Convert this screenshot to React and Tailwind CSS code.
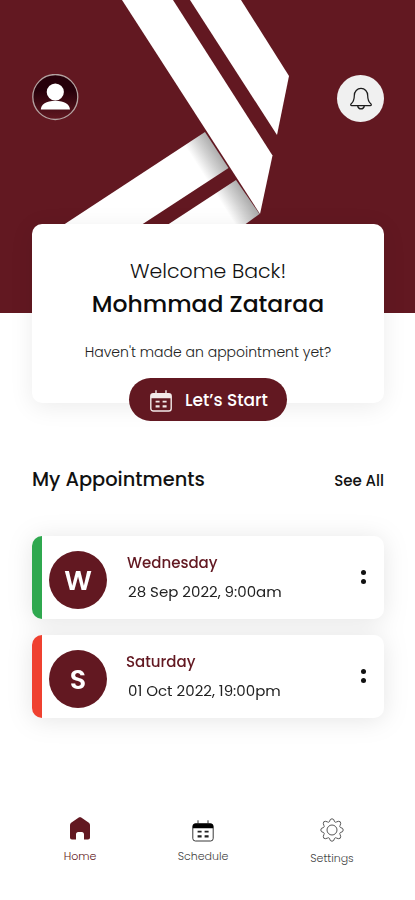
import React from "react";

const appointments = [
  { id: 1, day: "Wednesday", date: "28 Sep 2022, 9:00am", bar: "bg-[#2fa84f]", indent: "" },
  { id: 2, day: "Saturday", date: "01 Oct 2022, 19:00pm", bar: "bg-[#ef4130]", indent: "-ml-px" },
];

function CalendarIcon({ className, top, frame }) {
  return (
    <svg viewBox="0 0 22 22" className={className} fill="none" stroke="currentColor">
      <rect x="0.8" y="3.8" width="20.4" height="17.2" rx="2.6" strokeWidth={frame} />
      <path d="M0.8 8.200V6.200C0.8 4.700 1.900 3.600 3.400 3.600H18.600C20.100 3.600 21.200 4.700 21.200 6.200V8.200Z" fill={top} stroke="none" />
      <path d="M6 0.300V4.400M16 0.300V4.400" strokeWidth={frame} />
      <path d="M5.600 11.700H9.600M12.600 11.700H16.600" strokeWidth="1.800" />
      <path d="M5.600 16.400H9.600M12.600 16.400H16.600" strokeWidth="2.200" />
    </svg>
  );
}

function Stripes() {
  return (
    <svg viewBox="0 0 415 313" className="absolute inset-0 h-full w-full">
      <defs>
        <linearGradient id="fold" gradientUnits="userSpaceOnUse" x1="232" y1="171" x2="210" y2="185">
          <stop offset="0" stopColor="#a9a9a9" />
          <stop offset="0.5" stopColor="#d2d2d2" />
          <stop offset="1" stopColor="#ffffff" />
        </linearGradient>
      </defs>
      <path d="M64 224.500L205 132L228.500 168L142 224.500Z" fill="url(#fold)" />
      <path d="M168 224.500L236 180L259.500 214L245 224.500Z" fill="url(#fold)" />
      <path d="M122 0H173L272.500 155.500L260 214Z" fill="#fff" />
      <path d="M190 0H241L289 76L277 135Z" fill="#fff" />
    </svg>
  );
}

function Header() {
  return (
    <header className="relative h-[313px] bg-[#621821]">
      <Stripes />
      <div className="relative flex items-start justify-between pt-[74px] pr-[31px] pl-8">
        <button className="h-[47px] w-[47px]">
          <svg viewBox="0 0 47 47" className="h-full w-full">
            <defs>
              <linearGradient id="avatar" x1="0" y1="0" x2="0" y2="1">
                <stop offset="0.35" stopColor="#26000a" />
                <stop offset="1" stopColor="#621821" />
              </linearGradient>
            </defs>
            <circle cx="23.300" cy="23" r="22.500" fill="url(#avatar)" stroke="#b3a2a1" strokeWidth="1.300" />
            <circle cx="23.300" cy="18" r="8.600" fill="#fff" />
            <path d="M8.800 35.500C9 30.500 14 26.800 23.300 26.800S37.700 30.500 38 35.500Z" fill="#fff" />
          </svg>
        </button>
        <button className="mt-px flex h-[47px] w-[47px] items-center justify-center rounded-full bg-[#f0f0f0]">
          <svg viewBox="0 0 24 24" className="h-[23px] w-6" fill="none" stroke="#1c1c1c" strokeWidth="1.300" strokeLinejoin="round">
            <path d="M12 1.500C8 1.500 5 4.600 5 9C5 13.500 3.900 15.500 1.800 17.400C0.800 18.400 1.200 19.500 2.400 19.500H21.600C22.800 19.500 23.200 18.400 22.200 17.400C20.100 15.500 19 13.500 19 9C19 4.600 16 1.500 12 1.500Z" />
            <path d="M8.500 19.800C9 21.800 10.300 22.800 12 22.800S15 21.800 15.500 19.800" />
          </svg>
        </button>
      </div>
    </header>
  );
}

function WelcomeCard() {
  return (
    <section className="relative mr-[31px] -mt-[89px] ml-8 flex h-[179px] flex-col items-center rounded-[10px] bg-white pt-[33px] whitespace-nowrap shadow-[0_4px_24px_rgba(0,0,0,0.08)]">
      <p className="text-[20.5px] leading-7 font-light text-[#111]">Welcome Back!</p>
      <h1 className="mt-[5px] text-[23.5px] leading-7 font-medium text-[#0c0c0c]">Mohmmad Zataraa</h1>
      <p className="mt-6 text-[14px] leading-5 font-light text-[#222]">Haven't made an appointment yet?</p>
      <button className="mt-4 flex h-[43px] w-[158px] shrink-0 items-center rounded-full bg-[#621821] pl-[21px] text-white">
        <CalendarIcon className="mt-0.5 h-[22px] w-[22px] text-[#f3e9e9]" top="currentColor" frame="1.400" />
        <span className="ml-[13px] pt-[3px] text-[17px] font-medium">Let’s Start</span>
      </button>
    </section>
  );
}

function AppointmentCard({ item }) {
  return (
    <li className="flex h-[83px] items-center overflow-hidden rounded-[10px] bg-white">
      <div className={`h-full w-2.5 ${item.bar}`} />
      <div className="mt-1 ml-[7px] flex h-[58px] w-[58px] items-center justify-center rounded-full bg-[#621821] pt-1 text-[27px] font-semibold text-white">
        {item.day[0]}
      </div>
      <div className="-mt-px ml-5 whitespace-nowrap">
        <p className={`text-[15px] leading-5 font-medium text-[#621821] ${item.indent}`}>{item.day}</p>
        <p className="mt-[9px] ml-px text-[15px] leading-5 text-[#222]">{item.date}</p>
      </div>
      <button className="-mt-0.5 mr-[18px] ml-auto flex flex-col gap-1">
        <span className="h-[5px] w-[5px] rounded-full bg-[#111]" />
        <span className="h-[5px] w-[5px] rounded-full bg-[#111]" />
      </button>
    </li>
  );
}

function Appointments() {
  return (
    <section className="mt-[62px] pr-[31px] pl-8">
      <div className="flex h-7 items-center justify-between whitespace-nowrap">
        <h2 className="pt-0.5 text-[19.4px] font-medium text-[#111]">My Appointments</h2>
        <a href="#" className="pt-1 text-[15px] font-medium text-[#111]">See All</a>
      </div>
      <ul className="mt-[43px] flex flex-col gap-4 drop-shadow-[0_2px_12px_rgba(0,0,0,0.1)]">
        {appointments.map((item) => (
          <AppointmentCard key={item.id} item={item} />
        ))}
      </ul>
    </section>
  );
}

function BottomNav() {
  return (
    <nav className="mt-[99px] flex items-start justify-between pr-[61px] pl-[62px] text-[11px] leading-[14px] font-light text-[#444]">
      <a href="#" className="flex w-9 flex-col items-center text-[#621821]">
        <svg viewBox="0 0 22 23" className="h-[23px] w-[22px]" fill="currentColor">
          <path d="M9.400 0.800C10.400 0.200 11.600 0.200 12.600 0.800L19.500 5.600C20.500 6.300 21 7.200 21 8.400V20.500C21 21.700 20.200 22.500 19 22.500H15V17.500C15 15.900 14.200 15 12.800 15H9.200C7.800 15 7 15.900 7 17.500V22.500H3C1.800 22.500 1 21.700 1 20.500V8.400C1 7.200 1.500 6.300 2.500 5.600Z" />
        </svg>
        <span className="mt-[9px]">Home</span>
      </a>
      <a href="#" className="mr-0.5 flex w-[52px] flex-col items-center">
        <CalendarIcon className="mt-[3px] h-[22px] w-[22px] text-[#222]" top="#000" frame="0.900" />
        <span className="mt-[7px]">Schedule</span>
      </a>
      <a href="#" className="flex w-11 flex-col items-center">
        <svg viewBox="0 0 24 24" className="mt-px h-6 w-6" fill="none" stroke="#444" strokeWidth="0.900" strokeLinejoin="round">
          <path d="M10.300 1.500Q12 0 13.700 1.500L14.500 3.600Q15.300 4.700 16.600 3.900L18.400 3.300Q20.900 3.100 20.700 5.600L20.100 7.400Q19.300 8.700 20.400 9.500L22.500 10.300Q24 12 22.500 13.700L20.400 14.500Q19.300 15.300 20.100 16.600L20.700 18.400Q20.900 20.900 18.400 20.700L16.600 20.100Q15.300 19.300 14.500 20.400L13.700 22.500Q12 24 10.300 22.500L9.500 20.400Q8.700 19.300 7.400 20.100L5.600 20.700Q3.100 20.900 3.300 18.400L3.900 16.600Q4.700 15.300 3.600 14.500L1.500 13.700Q0 12 1.500 10.300L3.600 9.500Q4.700 8.700 3.900 7.400L3.300 5.600Q3.100 3.100 5.600 3.300L7.400 3.900Q8.700 4.700 9.500 3.600Z" />
          <circle cx="12" cy="12" r="5" />
        </svg>
        <span className="mt-[9px]">Settings</span>
      </a>
    </nav>
  );
}

export default function App() {
  return (
    <main className="h-[900px] w-[415px] overflow-hidden bg-white font-[Poppins,Inter,sans-serif]">
      <Header />
      <WelcomeCard />
      <Appointments />
      <BottomNav />
    </main>
  );
}
